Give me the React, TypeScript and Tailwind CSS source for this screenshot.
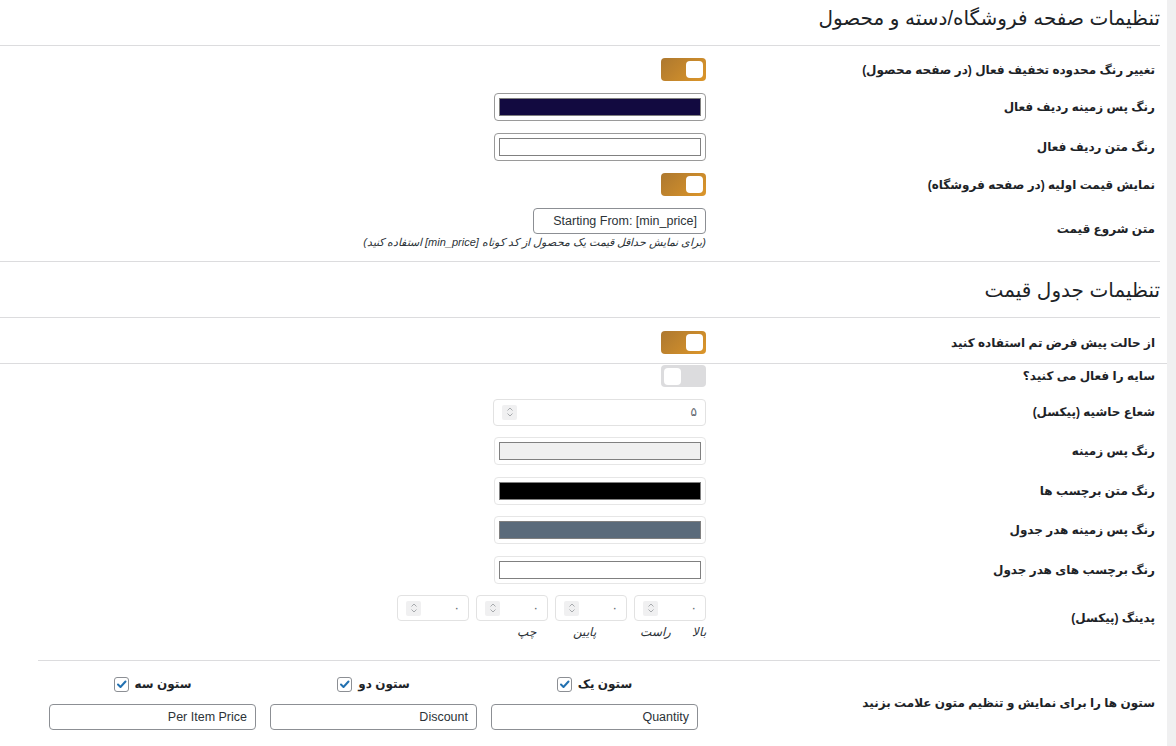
import type { ReactNode } from "react";

// Settings screen for the store/category/product page and the price table.
// RTL layout, WordPress admin look.

const FONT = { fontFamily: '"Liberation Sans", "DejaVu Sans", sans-serif' };

function Toggle({ on }: { on: boolean }) {
  return (
    <div
      className={`flex w-[45px] items-center rounded-[4px] px-[3px] ${
        on
          ? "h-[23px] justify-start bg-[linear-gradient(135deg,#ad782f,#dc962a)]"
          : "h-[22px] justify-end bg-[#dcdcde]"
      }`}
    >
      <span className="h-[17px] w-[17px] rounded-[4px] bg-white" />
    </div>
  );
}

function ColorBox({ color, soft }: { color: string; soft?: boolean }) {
  return (
    <div
      className={`h-[28px] w-[212px] rounded-[4px] border bg-white px-[4px] py-[4px] ${
        soft ? "border-[#e6e6e6]" : "border-[#9a9a9a]"
      }`}
    >
      <div
        className="h-full w-full border border-[#808080]"
        style={{ backgroundColor: color }}
      />
    </div>
  );
}

function Spinner() {
  return (
    <span className="flex h-[15px] w-[15px] items-center justify-center rounded-[2px] bg-[#f0f0f1]">
      <svg width="8" height="12" viewBox="0 0 8 12" fill="none">
        <path d="M1.5 4.5 4 2l2.5 2.5" stroke="#a7aaad" strokeWidth="1" />
        <path d="M1.5 7.5 4 10l2.5-2.5" stroke="#a7aaad" strokeWidth="1" />
      </svg>
    </span>
  );
}

function NumberBox({ value, wide }: { value: string; wide?: boolean }) {
  return (
    <div
      className={`flex items-center justify-between rounded-[4px] border border-[#e2e2e2] bg-white pl-[8px] pr-[8px] text-[12px] text-[#646970] ${
        wide ? "h-[27px] w-[213px]" : "h-[26px] w-[72px]"
      }`}
    >
      <span>{value}</span>
      <Spinner />
    </div>
  );
}

function TextBox({ value, w }: { value: string; w: string }) {
  return (
    <div
      dir="ltr"
      className={`flex h-[26px] items-center justify-end whitespace-nowrap rounded-[4px] border border-[#8c8f94] bg-white px-[8px] text-[12.5px] text-[#2c3338] ${w}`}
    >
      {value}
    </div>
  );
}

function Row({ label, children }: { label: string; children: ReactNode }) {
  return (
    <div className="flex items-center">
      <div className="w-[461px] shrink-0 pr-[12px] text-[12px] font-bold leading-[18px] text-[#1d2327]">
        {label}
      </div>
      <div>{children}</div>
    </div>
  );
}

function TopRow({ label, children }: { label: string; children: ReactNode }) {
  return (
    <div className="flex items-center">
      <div className="w-[454px] shrink-0 pr-[5px] text-[12px] font-bold leading-[18px] text-[#1d2327]">
        {label}
      </div>
      {children}
    </div>
  );
}

function ColumnField({ title, value }: { title: string; value: string }) {
  return (
    <div className="flex w-[207px] flex-col items-center gap-[11px]">
      <div className="flex items-center gap-[6px] text-[12px] font-bold leading-[18px] text-[#1d2327]">
        <span>{title}</span>
        <span className="flex h-[15px] w-[15px] items-center justify-center rounded-[3px] border border-[#8c8f94] bg-white">
          <svg width="11" height="11" viewBox="0 0 11 11" fill="none">
            <path
              d="M2 5.5 4.5 8 9.5 2.5"
              stroke="#2271b1"
              strokeWidth="2"
              strokeLinecap="round"
              strokeLinejoin="round"
            />
          </svg>
        </span>
      </div>
      <TextBox value={value} w="w-[207px]" />
    </div>
  );
}

export default function App() {
  return (
    <div
      className="flex h-[746px] w-[1176px] overflow-hidden bg-white"
      style={FONT}
    >
      <main dir="rtl" className="w-[1167px] shrink-0">
        <div className="mr-[7px] h-[46px] border-b border-[#dcdcde] pt-[3px]">
          <h1 className="text-[20px] leading-[30px] text-[#1d2327]">
            تنظیمات صفحه فروشگاه/دسته و محصول
          </h1>
        </div>

        <section className="mr-[7px] flex flex-col gap-[12px] border-b border-[#dcdcde] pb-[12px] pt-[12px]">
          <TopRow label="تغییر رنگ محدوده تخفیف فعال (در صفحه محصول)">
            <Toggle on />
          </TopRow>
          <TopRow label="رنگ پس زمینه ردیف فعال">
            <ColorBox color="#120a40" />
          </TopRow>
          <TopRow label="رنگ متن ردیف فعال">
            <ColorBox color="#ffffff" />
          </TopRow>
          <TopRow label="نمایش قیمت اولیه (در صفحه فروشگاه)">
            <Toggle on />
          </TopRow>
          <TopRow label="متن شروع قیمت">
            <div className="flex flex-col items-start gap-[2px]">
              <TextBox value="Starting From: [min_price]" w="w-[173px]" />
              <p className="text-[11px] italic leading-[13px] text-[#2c3338]">
                (برای نمایش حداقل قیمت یک محصول از کد کوتاه [min_price] استفاده
                کنید)
              </p>
            </div>
          </TopRow>
        </section>

        <div className="mr-[7px] flex h-[56px] items-center border-b border-[#dcdcde]">
          <h2 className="text-[20px] leading-[30px] text-[#1d2327]">
            تنظیمات جدول قیمت
          </h2>
        </div>

        <div className="border-b border-[#dcdcde] pb-[9px] pt-[13px]">
          <Row label="از حالت پیش فرض تم استفاده کنید">
            <Toggle on />
          </Row>
        </div>

        <section className="flex flex-col gap-[11.5px] pt-[1px]">
          <Row label="سایه را فعال می کنید؟">
            <Toggle on={false} />
          </Row>
          <Row label="شعاع حاشیه (پیکسل)">
            <NumberBox value="۵" wide />
          </Row>
          <Row label="رنگ پس زمینه">
            <ColorBox color="#f0f0f0" soft />
          </Row>
          <Row label="رنگ متن برچسب ها">
            <ColorBox color="#000000" soft />
          </Row>
          <Row label="رنگ پس زمینه هدر جدول">
            <ColorBox color="#5b6b7b" soft />
          </Row>
          <Row label="رنگ برچسب های هدر جدول">
            <ColorBox color="#ffffff" soft />
          </Row>
          <Row label="پدینگ (پیکسل)">
            <div className="flex flex-col gap-[3px]">
              <div className="flex gap-[7px]">
                <NumberBox value="۰" />
                <NumberBox value="۰" />
                <NumberBox value="۰" />
                <NumberBox value="۰" />
              </div>
              <div className="flex text-[12px] italic leading-[16px] text-[#2c3338]">
                <span className="w-[35px]">بالا</span>
                <span className="w-[75px]">راست</span>
                <span className="w-[60px]">پایین</span>
                <span>چپ</span>
              </div>
            </div>
          </Row>
        </section>

        <div className="ml-[38px] mr-[7px] mt-[20px] border-b border-[#dcdcde]" />

        <div className="flex items-center pt-[14px]">
          <div className="w-[469px] shrink-0 pr-[12px] pt-[1px] text-[12px] font-bold leading-[18px] text-[#1d2327]">
            ستون ها را برای نمایش و تنظیم متون علامت بزنید
          </div>
          <div className="flex gap-[14px]">
            <ColumnField title="ستون یک" value="Quantity" />
            <ColumnField title="ستون دو" value="Discount" />
            <ColumnField title="ستون سه" value="Per Item Price" />
          </div>
        </div>
      </main>
      <div className="flex-1 bg-[#f0f0f1]" />
    </div>
  );
}
